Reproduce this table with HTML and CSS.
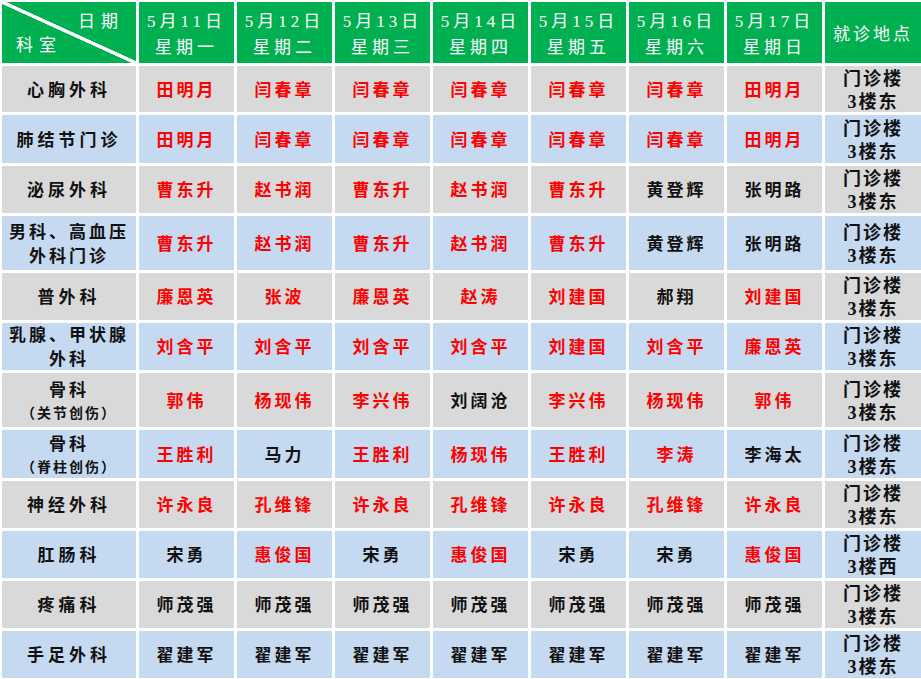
FILE: index.html
```html
<!DOCTYPE html>
<html lang="zh-CN">
<head>
<meta charset="utf-8">
<title>排班表</title>
<link rel="stylesheet" href="styles.css">
</head>
<body>
<div class="sheet">
  <div class="cell head corner">
    <span class="c-top">日期</span>
    <span class="c-bot">科室</span>
  </div>
  <div class="cell head"><span>5月11日</span><span>星期一</span></div>
  <div class="cell head"><span>5月12日</span><span>星期二</span></div>
  <div class="cell head"><span>5月13日</span><span>星期三</span></div>
  <div class="cell head"><span>5月14日</span><span>星期四</span></div>
  <div class="cell head"><span>5月15日</span><span>星期五</span></div>
  <div class="cell head"><span>5月16日</span><span>星期六</span></div>
  <div class="cell head"><span>5月17日</span><span>星期日</span></div>
  <div class="cell head loc-h">就诊地点</div>

  <div class="cell g dept">心胸外科</div>
  <div class="cell g r">田明月</div><div class="cell g r">闫春章</div><div class="cell g r">闫春章</div><div class="cell g r">闫春章</div><div class="cell g r">闫春章</div><div class="cell g r">闫春章</div><div class="cell g r">田明月</div>
  <div class="cell g loc"><span>门诊楼</span><span>3楼东</span></div>

  <div class="cell b dept">肺结节门诊</div>
  <div class="cell b r">田明月</div><div class="cell b r">闫春章</div><div class="cell b r">闫春章</div><div class="cell b r">闫春章</div><div class="cell b r">闫春章</div><div class="cell b r">闫春章</div><div class="cell b r">田明月</div>
  <div class="cell b loc"><span>门诊楼</span><span>3楼东</span></div>

  <div class="cell g dept">泌尿外科</div>
  <div class="cell g r">曹东升</div><div class="cell g r">赵书润</div><div class="cell g r">曹东升</div><div class="cell g r">赵书润</div><div class="cell g r">曹东升</div><div class="cell g k">黄登辉</div><div class="cell g k">张明路</div>
  <div class="cell g loc"><span>门诊楼</span><span>3楼东</span></div>

  <div class="cell b dept two"><span>男科、高血压</span><span>外科门诊</span></div>
  <div class="cell b r">曹东升</div><div class="cell b r">赵书润</div><div class="cell b r">曹东升</div><div class="cell b r">赵书润</div><div class="cell b r">曹东升</div><div class="cell b k">黄登辉</div><div class="cell b k">张明路</div>
  <div class="cell b loc"><span>门诊楼</span><span>3楼东</span></div>

  <div class="cell g dept">普外科</div>
  <div class="cell g r">廉恩英</div><div class="cell g r">张波</div><div class="cell g r">廉恩英</div><div class="cell g r">赵涛</div><div class="cell g r">刘建国</div><div class="cell g k">郝翔</div><div class="cell g r">刘建国</div>
  <div class="cell g loc"><span>门诊楼</span><span>3楼东</span></div>

  <div class="cell b dept two"><span>乳腺、甲状腺</span><span>外科</span></div>
  <div class="cell b r">刘含平</div><div class="cell b r">刘含平</div><div class="cell b r">刘含平</div><div class="cell b r">刘含平</div><div class="cell b r">刘建国</div><div class="cell b r">刘含平</div><div class="cell b r">廉恩英</div>
  <div class="cell b loc"><span>门诊楼</span><span>3楼东</span></div>

  <div class="cell g dept two"><span>骨科</span><span class="sub">（关节创伤）</span></div>
  <div class="cell g r">郭伟</div><div class="cell g r">杨现伟</div><div class="cell g r">李兴伟</div><div class="cell g k">刘阔沧</div><div class="cell g r">李兴伟</div><div class="cell g r">杨现伟</div><div class="cell g r">郭伟</div>
  <div class="cell g loc"><span>门诊楼</span><span>3楼东</span></div>

  <div class="cell b dept two"><span>骨科</span><span class="sub">（脊柱创伤）</span></div>
  <div class="cell b r">王胜利</div><div class="cell b k">马力</div><div class="cell b r">王胜利</div><div class="cell b r">杨现伟</div><div class="cell b r">王胜利</div><div class="cell b r">李涛</div><div class="cell b k">李海太</div>
  <div class="cell b loc"><span>门诊楼</span><span>3楼东</span></div>

  <div class="cell g dept">神经外科</div>
  <div class="cell g r">许永良</div><div class="cell g r">孔维锋</div><div class="cell g r">许永良</div><div class="cell g r">孔维锋</div><div class="cell g r">许永良</div><div class="cell g r">孔维锋</div><div class="cell g r">许永良</div>
  <div class="cell g loc"><span>门诊楼</span><span>3楼东</span></div>

  <div class="cell b dept">肛肠科</div>
  <div class="cell b k">宋勇</div><div class="cell b r">惠俊国</div><div class="cell b k">宋勇</div><div class="cell b r">惠俊国</div><div class="cell b k">宋勇</div><div class="cell b k">宋勇</div><div class="cell b r">惠俊国</div>
  <div class="cell b loc"><span>门诊楼</span><span>3楼西</span></div>

  <div class="cell g dept">疼痛科</div>
  <div class="cell g k">师茂强</div><div class="cell g k">师茂强</div><div class="cell g k">师茂强</div><div class="cell g k">师茂强</div><div class="cell g k">师茂强</div><div class="cell g k">师茂强</div><div class="cell g k">师茂强</div>
  <div class="cell g loc"><span>门诊楼</span><span>3楼东</span></div>

  <div class="cell b dept">手足外科</div>
  <div class="cell b k">翟建军</div><div class="cell b k">翟建军</div><div class="cell b k">翟建军</div><div class="cell b k">翟建军</div><div class="cell b k">翟建军</div><div class="cell b k">翟建军</div><div class="cell b k">翟建军</div>
  <div class="cell b loc"><span>门诊楼</span><span>3楼东</span></div>
</div>
</body>
</html>
```
FILE: styles.css
```css
html, body {
  margin: 0;
  padding: 0;
  background: #ffffff;
  overflow: hidden;
}
body {
  width: 921px;
  height: 679px;
  font-family: "Liberation Serif", "Noto Sans CJK SC", serif;
}
.sheet {
  display: grid;
  grid-template-columns: 134px repeat(7, 95px) 96px;
  grid-template-rows: 61px 46px 48px 47px 54px 47px 47px 54px 48px 47px 47px 47px 47px;
  gap: 3px;
  padding: 2px 0 0 2px;
}
.cell {
  display: flex;
  flex-direction: column;
  align-items: center;
  justify-content: center;
  padding-top: 3px;
  font-size: 17px;
  font-weight: 700;
  letter-spacing: 3px;
  line-height: 22px;
  overflow: hidden;
  white-space: nowrap;
}
.head {
  background: #00b050;
  color: #ffffff;
  font-weight: 400;
  letter-spacing: 4px;
  line-height: 26px;
  padding-top: 4px;
}
.loc-h {
  letter-spacing: 3px;
}
.corner {
  position: relative;
  align-items: stretch;
  justify-content: space-between;
  padding: 8px 12px 6px 14px;
  background:
    linear-gradient(to top right, transparent calc(50% - 2px), #ffffff calc(50% - 1.5px), #ffffff calc(50% + 1.5px), transparent calc(50% + 2px)),
    #00b050;
}
.c-top {
  align-self: flex-end;
  letter-spacing: 6px;
  line-height: 24px;
}
.c-bot {
  align-self: flex-start;
  letter-spacing: 6px;
  line-height: 24px;
}
.g { background: #d9d9d9; }
.b { background: #c5d9f1; }
.r { color: #ff0000; }
.k { color: #111111; }
.dept { color: #111111; letter-spacing: 4px; }
.two { line-height: 24px; letter-spacing: 3px; }
.sub { font-size: 14px; letter-spacing: 2px; line-height: 22px; }
.loc {
  color: #111111;
  font-size: 18px;
  letter-spacing: 2px;
  line-height: 23px;
}
```
